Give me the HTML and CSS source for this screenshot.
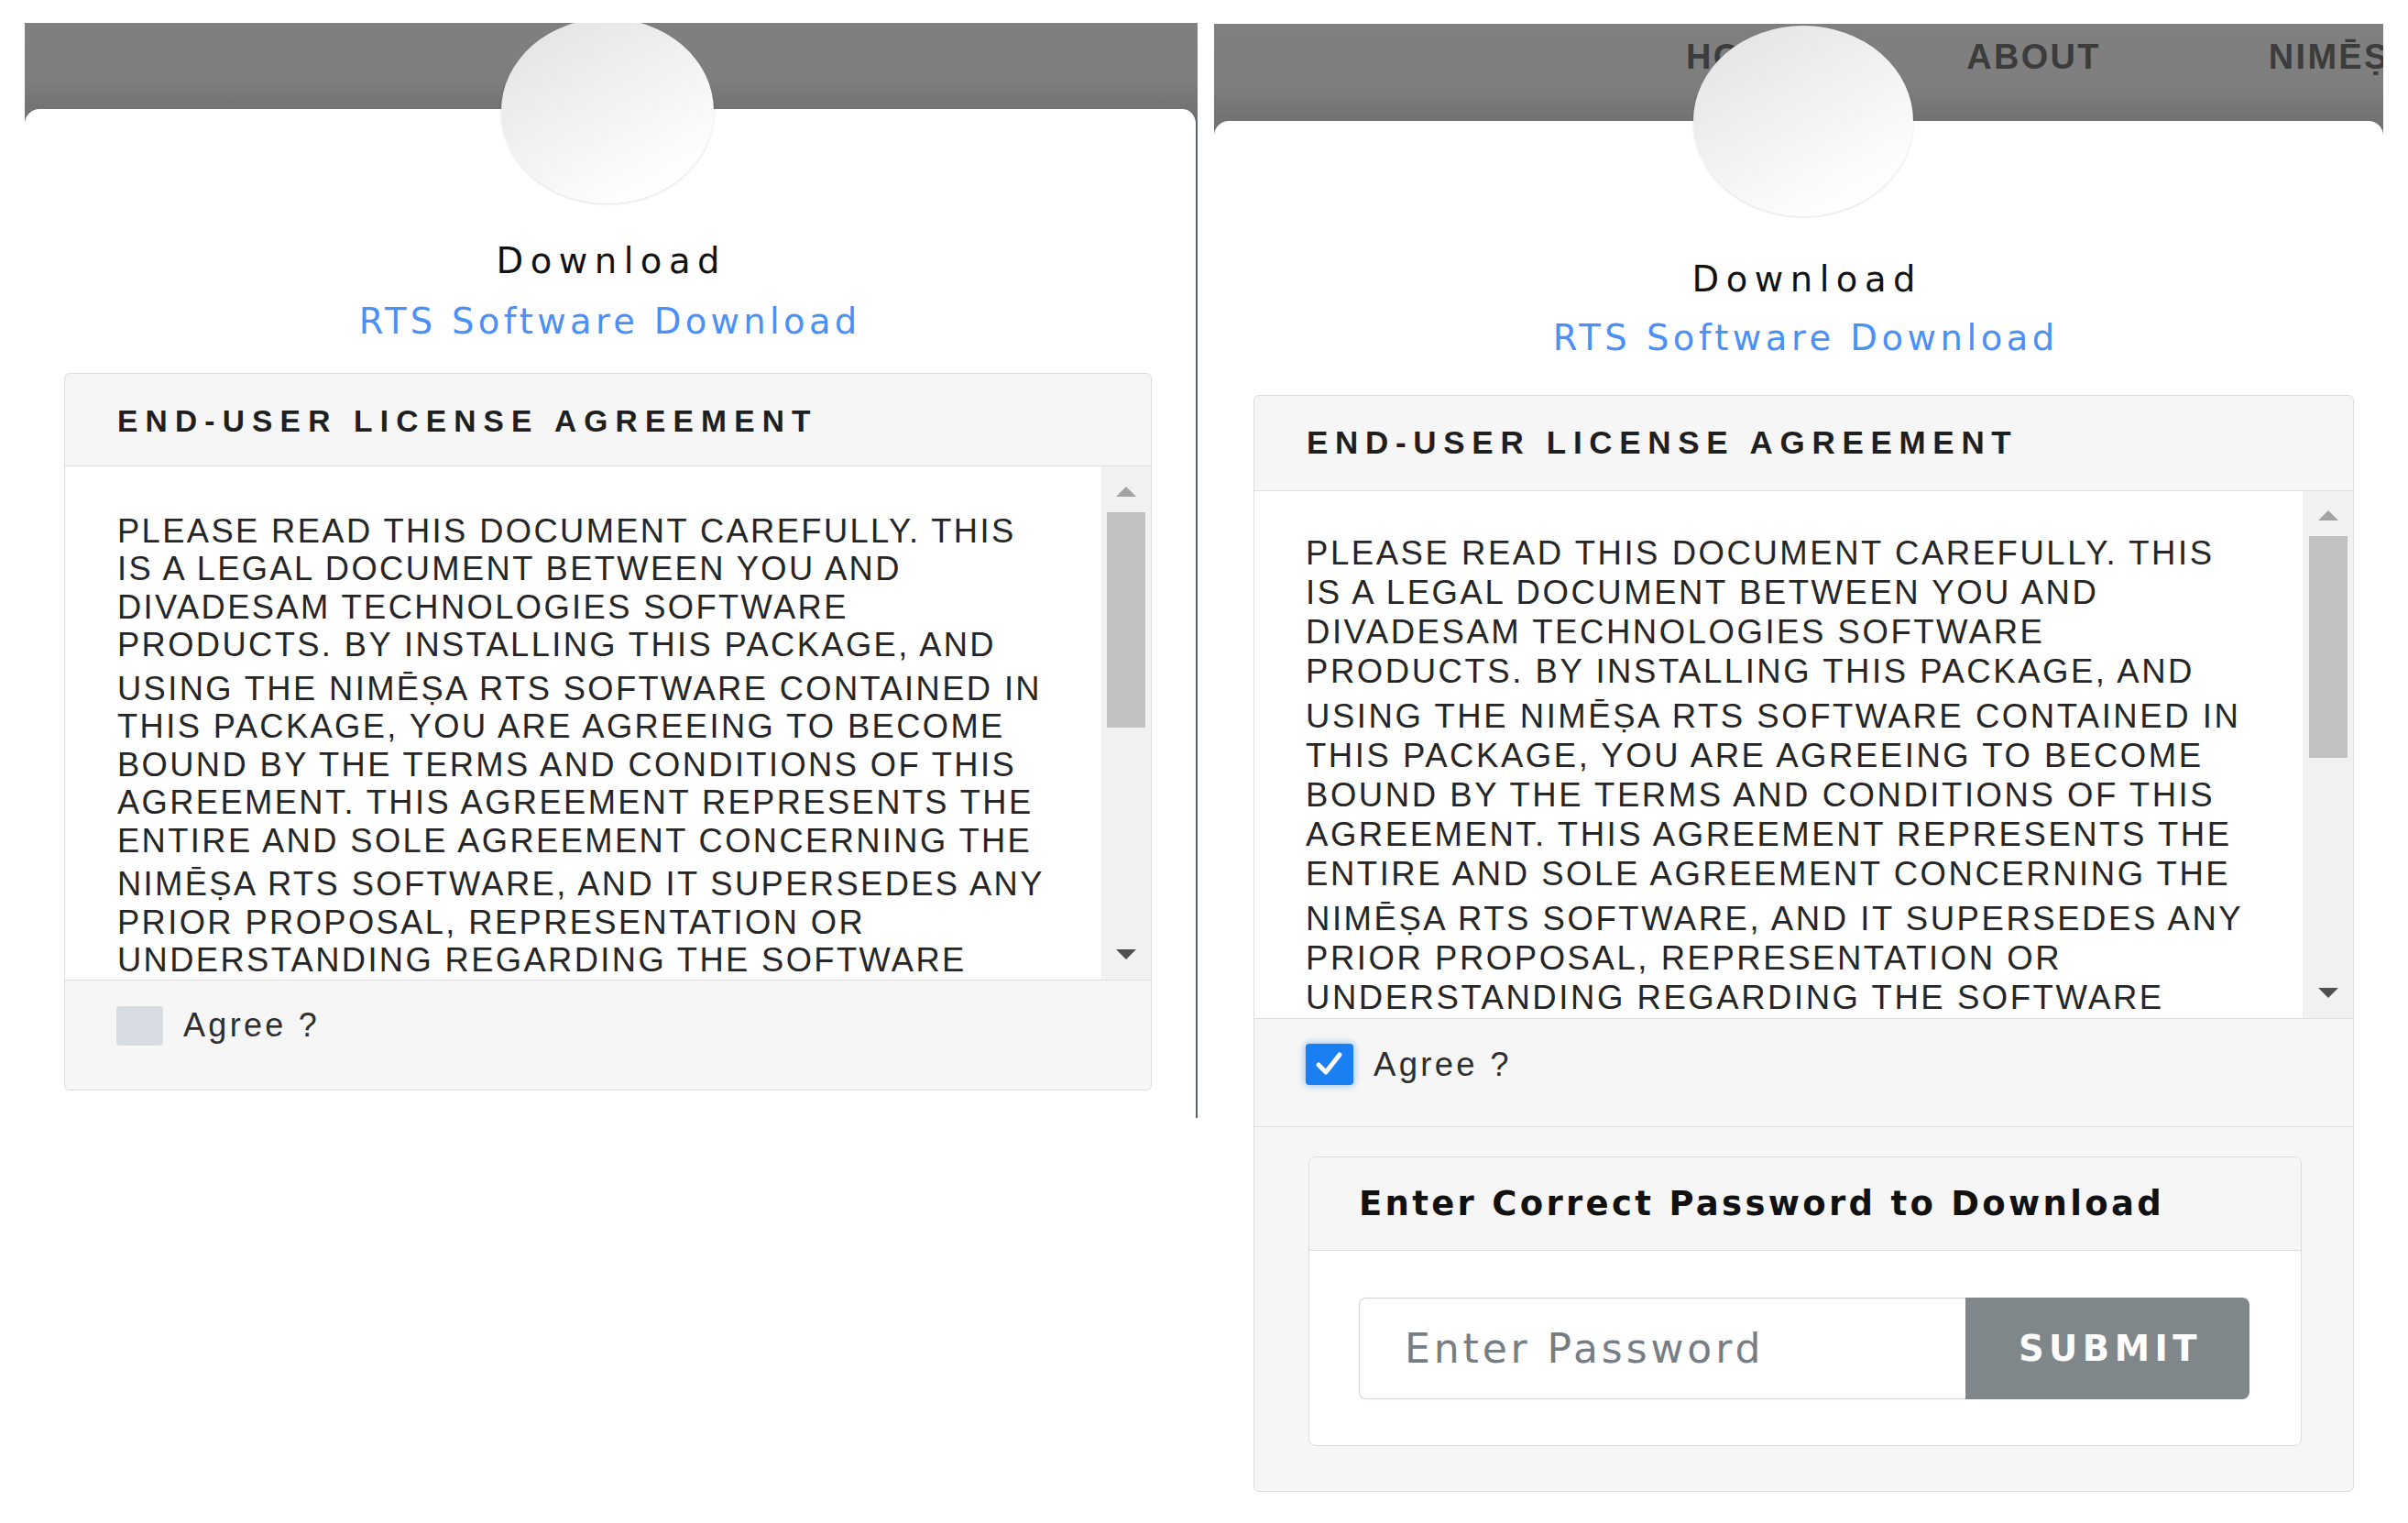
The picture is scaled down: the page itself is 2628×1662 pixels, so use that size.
FILE: index.html
```html
<!DOCTYPE html>
<html lang="en">
<head>
<meta charset="utf-8">
<title>RTS Software Download</title>
<link rel="stylesheet" href="styles.css">
</head>
<body>
<main class="stage">

  <section class="shot shot-a">
    <div class="topnav"></div>
    <div class="avatar"></div>
    <div class="card">
      <h1 class="title">Download</h1>
      <p class="subtitle">RTS Software Download</p>
      <div class="panel">
        <div class="panel-head">END-USER LICENSE AGREEMENT</div>
        <div class="panel-body">
          <div class="eula">
            <span class="ln">PLEASE READ THIS DOCUMENT CAREFULLY. THIS</span>
            <span class="ln">IS A LEGAL DOCUMENT BETWEEN YOU AND</span>
            <span class="ln">DIVADESAM TECHNOLOGIES SOFTWARE</span>
            <span class="ln">PRODUCTS. BY INSTALLING THIS PACKAGE, AND</span>
            <span class="ln ln-accent">USING THE NIMĒṢA RTS SOFTWARE CONTAINED IN</span>
            <span class="ln">THIS PACKAGE, YOU ARE AGREEING TO BECOME</span>
            <span class="ln">BOUND BY THE TERMS AND CONDITIONS OF THIS</span>
            <span class="ln">AGREEMENT. THIS AGREEMENT REPRESENTS THE</span>
            <span class="ln">ENTIRE AND SOLE AGREEMENT CONCERNING THE</span>
            <span class="ln ln-accent">NIMĒṢA RTS SOFTWARE, AND IT SUPERSEDES ANY</span>
            <span class="ln">PRIOR PROPOSAL, REPRESENTATION OR</span>
            <span class="ln">UNDERSTANDING REGARDING THE SOFTWARE</span>
          </div>
          <div class="scrollbar">
            <span class="arrow arrow-up"></span>
            <span class="thumb"></span>
            <span class="arrow arrow-down"></span>
          </div>
        </div>
        <div class="panel-foot">
          <label class="agree"><span class="box"></span><span class="agree-text">Agree ?</span></label>
        </div>
      </div>
    </div>
  </section>

  <section class="shot shot-b">
    <nav class="topnav">
      <a class="nav-link" href="#">HOME</a>
      <a class="nav-link" href="#">ABOUT</a>
      <a class="nav-link" href="#">NIMĒṢA</a>
    </nav>
    <div class="avatar"></div>
    <div class="card">
      <h1 class="title">Download</h1>
      <p class="subtitle">RTS Software Download</p>
      <div class="panel">
        <div class="panel-head">END-USER LICENSE AGREEMENT</div>
        <div class="panel-body">
          <div class="eula">
            <span class="ln">PLEASE READ THIS DOCUMENT CAREFULLY. THIS</span>
            <span class="ln">IS A LEGAL DOCUMENT BETWEEN YOU AND</span>
            <span class="ln">DIVADESAM TECHNOLOGIES SOFTWARE</span>
            <span class="ln">PRODUCTS. BY INSTALLING THIS PACKAGE, AND</span>
            <span class="ln ln-accent">USING THE NIMĒṢA RTS SOFTWARE CONTAINED IN</span>
            <span class="ln">THIS PACKAGE, YOU ARE AGREEING TO BECOME</span>
            <span class="ln">BOUND BY THE TERMS AND CONDITIONS OF THIS</span>
            <span class="ln">AGREEMENT. THIS AGREEMENT REPRESENTS THE</span>
            <span class="ln">ENTIRE AND SOLE AGREEMENT CONCERNING THE</span>
            <span class="ln ln-accent">NIMĒṢA RTS SOFTWARE, AND IT SUPERSEDES ANY</span>
            <span class="ln">PRIOR PROPOSAL, REPRESENTATION OR</span>
            <span class="ln">UNDERSTANDING REGARDING THE SOFTWARE</span>
          </div>
          <div class="scrollbar">
            <span class="arrow arrow-up"></span>
            <span class="thumb"></span>
            <span class="arrow arrow-down"></span>
          </div>
        </div>
        <div class="panel-foot">
          <label class="agree"><span class="box box-checked"><svg class="tick" viewBox="0 0 52 45" width="52" height="45"><path d="M14 23 L22 31 L37 12" fill="none" stroke="#ffffff" stroke-width="5" stroke-linecap="round" stroke-linejoin="round"/></svg></span><span class="agree-text">Agree ?</span></label>
        </div>
        <div class="panel-pass">
          <div class="pass-card">
            <div class="pass-head">Enter Correct Password to Download</div>
            <div class="pass-body">
              <div class="input-group">
                <input class="pass-input" type="password" placeholder="Enter Password">
                <button class="btn-submit" type="button">SUBMIT</button>
              </div>
            </div>
          </div>
        </div>
      </div>
    </div>
  </section>

</main>
</body>
</html>
```

FILE: styles.css
```css
* { box-sizing: border-box; }

html, body { margin: 0; padding: 0; }

body {
  width: 2628px;
  height: 1662px;
  overflow: hidden;
  background: #ffffff;
  font-family: "Liberation Sans", Arial, sans-serif;
  color: #333333;
}

.stage {
  display: flex;
  align-items: flex-start;
  gap: 18px;
  padding: 25px 0 0 27px;
}

/* ---------- screenshot frames ---------- */
.shot {
  position: relative;
  overflow: hidden;
  flex-shrink: 0;
  display: flex;
  flex-direction: column;
}
.shot-a { width: 1280px; height: 1195px; }
.shot-b { width: 1276px; height: 1636px; margin-top: 1px; }

.topnav {
  flex-shrink: 0;
  background: linear-gradient(to bottom, #808080 0%, #7e7e7e 55%, #737373 80%, #737373 100%);
}
.shot-a .topnav { height: 114px; }
.shot-b .topnav {
  height: 126px;
  display: flex;
  gap: 183px;
  padding: 17px 0 0 515px;
}
.nav-link {
  flex-shrink: 0;
  font-weight: 700;
  font-size: 38px;
  line-height: 38px;
  letter-spacing: 2.3px;
  color: #3c3c3c;
  text-decoration: none;
  white-space: nowrap;
}

.avatar {
  position: absolute;
  z-index: 2;
  border-radius: 50%;
  background: linear-gradient(150deg, #e1e1e1 0%, #efefef 40%, #fdfdfd 80%, #ffffff 100%);
  box-shadow: 0 1px 3px rgba(0, 0, 0, 0.14);
}
.shot-a .avatar { left: 520px; top: -5px; width: 232px; height: 202px; }
.shot-b .avatar { left: 523px; top: 2px; width: 240px; height: 208px; }

.card {
  position: relative;
  flex: 1;
  margin-top: -20px;
  display: flex;
  flex-direction: column;
  background: #ffffff;
  border-radius: 16px 16px 0 0;
}
.shot-a .card {
  padding: 146px 48px 30px 43px;
  border-right: 2px solid #59626a;
}
.shot-b .card { padding: 153px 32px 0 43px; }

/* ---------- titles ---------- */
.title {
  margin: 0;
  text-align: center;
  font-family: "DejaVu Sans", "Liberation Sans", sans-serif;
  font-weight: 400;
  font-size: 38.5px;
  line-height: 39px;
  letter-spacing: 7.5px;
  padding-left: 7.5px;
  color: #111111;
}
.subtitle {
  margin: 0;
  text-align: center;
  font-family: "DejaVu Sans", "Liberation Sans", sans-serif;
  font-size: 38.5px;
  line-height: 39px;
  color: #4a90f5;
}
.shot-a .subtitle { margin: 27px 0 37px; letter-spacing: 4.3px; padding-left: 4.3px; }
.shot-b .subtitle { margin: 25px 0 43px; letter-spacing: 4.5px; padding-left: 4.5px; }

/* ---------- license panel ---------- */
.panel {
  border: 1px solid #dcdcdc;
  border-radius: 6px;
  background: #f6f6f6;
  overflow: hidden;
}
.panel-head {
  font-weight: 700;
  color: #1f1f1f;
  white-space: nowrap;
  border-bottom: 1px solid #dedede;
}
.shot-a .panel-head {
  padding: 35px 0 31px 57px;
  font-size: 33.5px;
  line-height: 33.5px;
  letter-spacing: 8.2px;
}
.shot-b .panel-head {
  padding: 33px 0 35px 57px;
  font-size: 35px;
  line-height: 35px;
  letter-spacing: 7.7px;
}

.panel-body {
  display: flex;
  background: #ffffff;
}
.shot-a .panel-body { height: 560px; }
.shot-b .panel-body { height: 575px; }

.eula {
  flex: 1;
  min-width: 0;
  overflow: hidden;
  white-space: nowrap;
  color: #262626;
}
.shot-a .eula {
  padding: 50px 0 0 57px;
  font-size: 36.3px;
  line-height: 41.5px;
  letter-spacing: 2.4px;
}
.shot-b .eula {
  padding: 46px 0 0 56px;
  font-size: 36.5px;
  line-height: 43px;
  letter-spacing: 2.55px;
}
.ln { display: block; }
.ln-accent { margin-top: 6px; }

.scrollbar {
  display: flex;
  flex-direction: column;
  align-items: center;
  background: #f1f1f1;
}
.shot-a .scrollbar { width: 54px; padding: 22px 0 22px; }
.shot-b .scrollbar { width: 55px; padding: 21px 0 22px; }

.arrow {
  width: 0;
  height: 0;
  border-left: 11px solid transparent;
  border-right: 11px solid transparent;
}
.arrow-up { border-bottom: 11px solid #a3a3a3; }
.arrow-down { border-top: 11px solid #505050; margin-top: auto; }

.thumb { width: 42px; background: #c1c1c1; }
.shot-a .thumb { height: 235px; margin-top: 17px; }
.shot-b .thumb { height: 242px; margin-top: 17px; }

.panel-foot { border-top: 1px solid #dedede; }
.shot-a .panel-foot { padding: 28px 0 48px 56px; }
.shot-b .panel-foot { padding: 27px 0 45px 56px; }

.agree {
  display: flex;
  align-items: center;
}
.box {
  flex-shrink: 0;
  display: block;
  border-radius: 4px;
  background: #d6dce1;
}
.shot-a .box { width: 51px; height: 43px; }
.shot-b .box { width: 52px; height: 45px; }
.box-checked {
  background: #1b7ff4;
  box-shadow: 0 0 6px 2px rgba(27, 127, 244, 0.35);
}
.tick { display: block; }

.agree-text {
  margin-left: 22px;
  font-size: 36px;
  line-height: 36px;
  letter-spacing: 3.3px;
  color: #2e2e2e;
}
.shot-b .agree-text { font-size: 36.5px; line-height: 36px; }

/* ---------- password section ---------- */
.panel-pass {
  border-top: 1px solid #dedede;
  padding: 32px 56px 49px 59px;
}
.pass-card {
  border: 1px solid #dcdcdc;
  border-radius: 8px;
  background: #ffffff;
  overflow: hidden;
}
.pass-head {
  padding: 32px 0 31px 54px;
  background: #f6f6f6;
  border-bottom: 1px solid #dedede;
  font-family: "DejaVu Sans", "Liberation Sans", sans-serif;
  font-weight: 700;
  font-size: 37px;
  line-height: 38px;
  letter-spacing: 3.3px;
  color: #111111;
  white-space: nowrap;
}
.pass-body { padding: 51px 56px 50px 54px; }

.input-group {
  display: flex;
  height: 111px;
}
.pass-input {
  flex: 1;
  min-width: 0;
  height: 111px;
  margin: 0;
  padding: 0 0 0 49px;
  border: 1px solid #ced4da;
  border-right: none;
  border-radius: 8px 0 0 8px;
  background: #ffffff;
  font-family: "DejaVu Sans", "Liberation Sans", sans-serif;
  font-size: 44px;
  letter-spacing: 3.9px;
  color: #495057;
  outline: none;
}
.pass-input::placeholder { color: #767d84; opacity: 1; }

.btn-submit {
  width: 310px;
  height: 111px;
  margin: 0;
  padding: 0 0 0 6px;
  border: none;
  border-radius: 0 8px 8px 0;
  background: #80878b;
  color: #ffffff;
  font-family: "DejaVu Sans", "Liberation Sans", sans-serif;
  font-weight: 700;
  font-size: 38.5px;
  letter-spacing: 5.5px;
}
```
